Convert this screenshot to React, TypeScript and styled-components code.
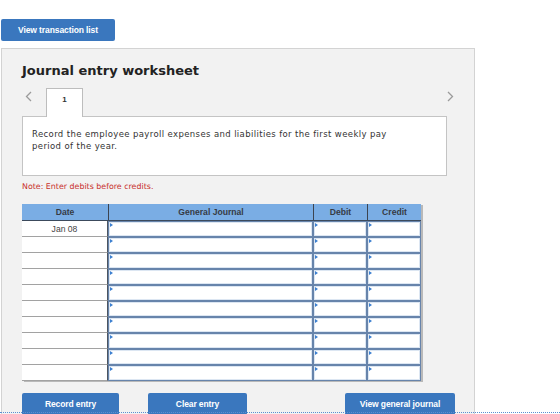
import React from "react";
import styled, { createGlobalStyle } from "styled-components";

const GlobalStyle = createGlobalStyle`
  html, body {
    margin: 0;
    padding: 0;
    background: #ffffff;
    overflow: hidden;
  }
  body {
    font-family: "DejaVu Sans", Verdana, sans-serif;
  }
`;

const Page = styled.div`
  width: 560px;
  height: 414px;
  padding: 18px 0 0 1px;
  box-sizing: border-box;
  overflow: hidden;
`;

const BlueButton = styled.button<{ $width: number; $offset?: number }>`
  width: ${(p) => p.$width}px;
  height: 22px;
  margin-left: ${(p) => p.$offset ?? 0}px;
  padding: 0;
  border: none;
  border-radius: 2px;
  background: #3a77be;
  color: #ffffff;
  font-family: "Liberation Sans", Arial, sans-serif;
  font-weight: bold;
  font-size: 8.5px;
  letter-spacing: -0.1px;
  flex-shrink: 0;
  cursor: pointer;
`;

const Panel = styled.section`
  width: 474px;
  margin-top: 7px;
  padding: 13px 20px 0;
  box-sizing: border-box;
  height: 400px;
  background: #f2f2f2;
  border: 1px solid #d3d3d3;
  border-bottom: none;
`;

const Title = styled.h2`
  margin: 0;
  font-family: "DejaVu Sans", Verdana, sans-serif;
  font-weight: bold;
  font-size: 13px;
  line-height: 17px;
  color: #222;
`;

const TabRow = styled.div`
  display: flex;
  width: 440px;
  height: 29px;
  margin-top: 8px;
`;

const Chevron = styled.span<{ $end?: boolean }>`
  width: 24px;
  display: flex;
  justify-content: ${(p) => (p.$end ? "center" : "flex-start")};
  padding-left: ${(p) => (p.$end ? 0 : 3)}px;
  box-sizing: border-box;
  align-self: flex-start;
  padding-top: 4px;
`;

const Tab = styled.div`
  align-self: flex-end;
  width: 37px;
  height: 29px;
  box-sizing: border-box;
  margin-bottom: -1px;
  background: #ffffff;
  border: 1px solid #bdbdbd;
  border-bottom: none;
  position: relative;
  z-index: 1;
  display: flex;
  justify-content: center;
  padding-top: 6px;
  font-family: "Liberation Sans", Arial, sans-serif;
  font-weight: bold;
  font-size: 8px;
  color: #333;
`;

const Spacer = styled.div`
  flex: 1;
`;

const Prompt = styled.div`
  width: 425px;
  height: 60px;
  box-sizing: border-box;
  background: #ffffff;
  border: 1px solid #c4c4c4;
  padding: 11px 9px 0;
  font-size: 8.5px;
  line-height: 12px;
  letter-spacing: 0.38px;
  color: #333;
`;

const PromptText = styled.p`
  margin: 0;
  width: 375px;
`;

const Note = styled.p`
  margin: 5px 0 0;
  font-size: 7.9px;
  line-height: 12px;
  color: #c8302c;
`;

const Table = styled.div`
  margin-top: 11px;
  width: 399px;
  box-shadow: 2px 1px 0 #b9b9b9;
`;

const HeadRow = styled.div`
  display: grid;
  grid-template-columns: 86px 205px 54px 54px;
  height: 17px;
  background: #7aade4;
  border-bottom: 1px solid #3c4a5c;
  box-sizing: border-box;
`;

const HeadCell = styled.div<{ $divider?: boolean }>`
  display: flex;
  align-items: center;
  justify-content: center;
  font-family: "Liberation Sans", Arial, sans-serif;
  font-weight: bold;
  font-size: 8.6px;
  color: #363b44;
  border-left: ${(p) => (p.$divider ? "1.5px solid #3c4450" : "none")};
`;

const BodyRow = styled.div`
  display: grid;
  grid-template-columns: 86px 205px 54px 54px;
  height: 16px;
`;

const DateCell = styled.div`
  background: #ffffff;
  border-bottom: 1.5px solid #a2a2a2;
  border-right: 1.5px solid #4d5560;
  box-sizing: border-box;
  display: flex;
  align-items: center;
  justify-content: center;
  font-family: "Liberation Sans", Arial, sans-serif;
  font-size: 8.6px;
  color: #444;
`;

const EntryCell = styled.div`
  position: relative;
  background: #ffffff;
  border: 1.5px solid #6784ab;
  box-shadow: inset 0 0 0 1px #dce6f2;
  box-sizing: border-box;

  &::before {
    content: "";
    position: absolute;
    left: 1px;
    top: 1px;
    border-left: 3px solid #3b7fd0;
    border-top: 2px solid transparent;
    border-bottom: 2px solid transparent;
  }
`;

const ButtonRow = styled.div`
  display: flex;
  margin-top: 12px;
`;

const FocusLine = styled.div`
  position: fixed;
  left: 0;
  top: 412px;
  width: 560px;
  border-top: 1px dotted #5b8fd0;
  pointer-events: none;
`;

const ArrowLeft = () => (
  <svg width="7" height="11" viewBox="0 0 7 11">
    <path d="M6 1 L1.5 5.5 L6 10" fill="none" stroke="#9b9b9b" strokeWidth="1.3" />
  </svg>
);

const ArrowRight = () => (
  <svg width="7" height="11" viewBox="0 0 7 11">
    <path d="M1 1 L5.5 5.5 L1 10" fill="none" stroke="#9b9b9b" strokeWidth="1.3" />
  </svg>
);

const rows = ["Jan 08", "", "", "", "", "", "", "", "", ""];

export default function App() {
  return (
    <Page>
      <GlobalStyle />
      <BlueButton $width={114}>View transaction list</BlueButton>
      <Panel>
        <Title>Journal entry worksheet</Title>
        <TabRow>
          <Chevron>
            <ArrowLeft />
          </Chevron>
          <Tab>1</Tab>
          <Spacer />
          <Chevron $end>
            <ArrowRight />
          </Chevron>
        </TabRow>
        <Prompt>
          <PromptText>
            Record the employee payroll expenses and liabilities for the first weekly pay
            period of the year.
          </PromptText>
        </Prompt>
        <Note>Note: Enter debits before credits.</Note>
        <Table>
          <HeadRow>
            <HeadCell>Date</HeadCell>
            <HeadCell $divider>General Journal</HeadCell>
            <HeadCell $divider>Debit</HeadCell>
            <HeadCell $divider>Credit</HeadCell>
          </HeadRow>
          {rows.map((date, i) => (
            <BodyRow key={i}>
              <DateCell>{date}</DateCell>
              <EntryCell />
              <EntryCell />
              <EntryCell />
            </BodyRow>
          ))}
        </Table>
        <ButtonRow>
          <BlueButton $width={97}>Record entry</BlueButton>
          <BlueButton $width={99} $offset={29}>Clear entry</BlueButton>
          <BlueButton $width={110} $offset={98}>View general journal</BlueButton>
        </ButtonRow>
      </Panel>
      <FocusLine />
    </Page>
  );
}
